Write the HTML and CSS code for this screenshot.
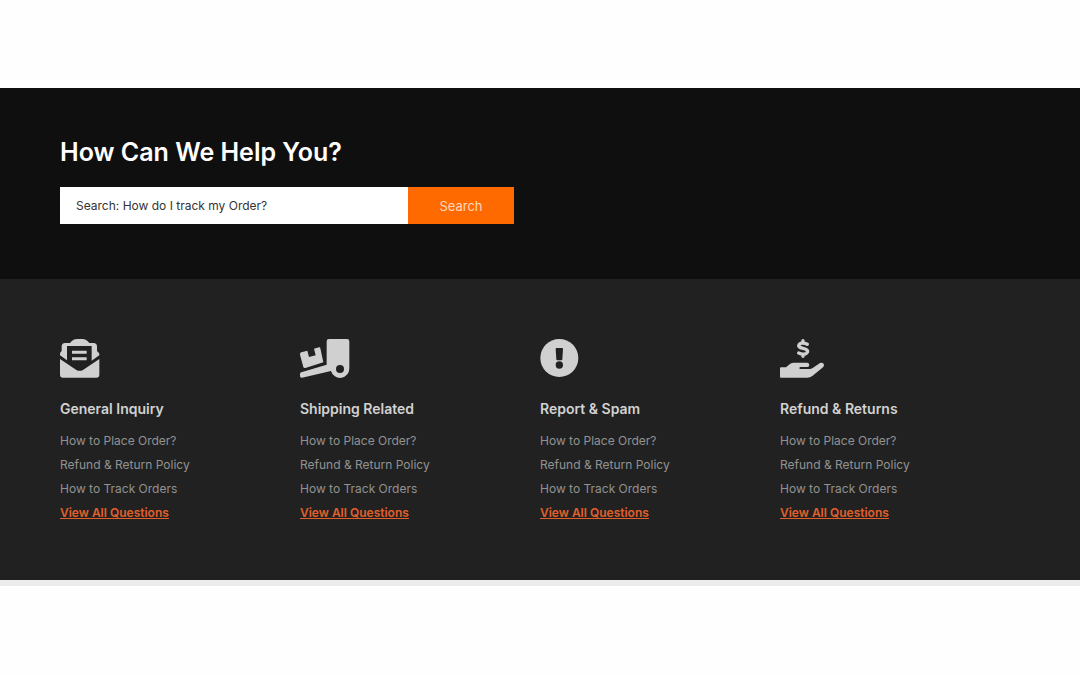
FILE: index.html
```html
<!DOCTYPE html>
<html lang="en">
<head>
<meta charset="utf-8">
<meta name="viewport" content="width=device-width, initial-scale=1">
<title>Help Center</title>
<link rel="stylesheet" href="styles.css">
</head>
<body>
<main class="help">
  <section class="hero">
    <h1 class="hero-title">How Can We Help You?</h1>
    <form class="search" role="search">
      <input class="search-input" type="text" aria-label="Search" placeholder="Search: How do I track my Order?">
      <button class="search-button" type="submit">Search</button>
    </form>
  </section>
  <section class="topics">
    <article class="topic">
      <svg class="icon" width="40" height="40" viewBox="30 24 120 120" aria-hidden="true">
        <path d="M30 76V72Q30 66 35 63V48Q36 39 45 39H60Q69 27 81 27H97Q109 27 118 39H130Q140 39 141 49V63Q147 67 148 72V76L125 92V48H51V91Z"/>
        <path d="M66 62H110V71H66ZM66 82H110V91H66Z"/>
        <path d="M30 87L78 119Q89 126 100 119L148 87V134Q148 143 139 143H39Q30 143 30 134Z"/>
      </svg>
      <h2 class="topic-title">General Inquiry</h2>
      <ul class="links">
        <li><a class="link" href="#">How to Place Order?</a></li>
        <li><a class="link" href="#">Refund &amp; Return Policy</a></li>
        <li><a class="link" href="#">How to Track Orders</a></li>
        <li><a class="link link-all" href="#">View All Questions</a></li>
      </ul>
    </article>
    <article class="topic">
      <svg class="icon" width="50" height="40" viewBox="30 24 150 120" aria-hidden="true">
        <path d="M34 67L52 62L57 81L77 76L72 56L87 52Q90 51 91 55L100 97L46 114Q41 115 40 111L30 74Q29 69 34 67Z"/>
        <path d="M110 34Q110 27 117 27H171Q178 27 178 34V115A28 28 0 0 1 123 123L36 143Q31 144 30 139V132Q30 128 34 127L110 104Z"/>
        <circle class="cut" cx="150" cy="117" r="12"/>
      </svg>
      <h2 class="topic-title">Shipping Related</h2>
      <ul class="links">
        <li><a class="link" href="#">How to Place Order?</a></li>
        <li><a class="link" href="#">Refund &amp; Return Policy</a></li>
        <li><a class="link" href="#">How to Track Orders</a></li>
        <li><a class="link link-all" href="#">View All Questions</a></li>
      </ul>
    </article>
    <article class="topic">
      <svg class="icon" width="40" height="40" viewBox="30 24 120 120" aria-hidden="true">
        <circle cx="88" cy="84" r="57"/>
        <path class="cut" d="M80 54H96Q99 54 99 57L97 88Q97 91 94 91H82Q79 91 79 88L77 57Q77 54 80 54Z"/>
        <circle class="cut" cx="88" cy="105" r="11"/>
      </svg>
      <h2 class="topic-title">Report &amp; Spam</h2>
      <ul class="links">
        <li><a class="link" href="#">How to Place Order?</a></li>
        <li><a class="link" href="#">Refund &amp; Return Policy</a></li>
        <li><a class="link" href="#">How to Track Orders</a></li>
        <li><a class="link link-all" href="#">View All Questions</a></li>
      </ul>
    </article>
    <article class="topic">
      <svg class="icon" width="50" height="40" viewBox="30 24 150 120" aria-hidden="true">
        <path class="stroke" d="M99 32V38M99 74V79M112 43Q99 36 90 41C82 48 88 53 99 55C111 57 117 63 109 70Q100 76 86 69"/>
        <path d="M33 112H48L60 102Q65 98 72 98H112Q118 99 118 105Q118 111 112 111H91Q88 112 88 114Q88 117 91 117H119Q124 117 128 114L150 99Q156 96 161 101Q164 107 159 112L127 138Q120 143 112 143H33Q30 143 30 140V115Q30 112 33 112Z"/>
      </svg>
      <h2 class="topic-title">Refund &amp; Returns</h2>
      <ul class="links">
        <li><a class="link" href="#">How to Place Order?</a></li>
        <li><a class="link" href="#">Refund &amp; Return Policy</a></li>
        <li><a class="link" href="#">How to Track Orders</a></li>
        <li><a class="link link-all" href="#">View All Questions</a></li>
      </ul>
    </article>
  </section>
</main>
</body>
</html>
```

FILE: styles.css
```css
* {
  box-sizing: border-box;
}

body {
  margin: 0;
  background: #fefefe;
  font-family: Inter, "Open Sans", sans-serif;
}

.help {
  margin: 88px 0;
  border-bottom: 6px solid #ececec;
}

.hero {
  padding: 48px 60px 55px;
  background: #0f0f0f;
}

.hero-title {
  margin: 0 0 19px;
  color: #fff;
  font-size: 25px;
  font-weight: 600;
  line-height: 32px;
}

.search {
  display: flex;
  max-width: 454px;
  height: 37px;
}

.search-input {
  flex: 1;
  min-width: 0;
  padding: 0 16px;
  border: 0;
  border-radius: 0;
  background: #fff;
  color: #333;
  font: 12px Inter, sans-serif;
}

.search-input::placeholder {
  color: #333;
  opacity: 1;
}

.search-button {
  width: 106px;
  padding: 0;
  border: 0;
  background: #ff6a00;
  color: #ffd9bd;
  font: 13px Inter, sans-serif;
}

.topics {
  display: grid;
  grid-template-columns: repeat(auto-fit, minmax(200px, 1fr));
  row-gap: 40px;
  padding: 59px 60px 55px;
  background: #212121;
}

.icon {
  display: block;
  fill: #d0d0d0;
}

.icon .cut {
  fill: #212121;
}

.icon .stroke {
  fill: none;
  stroke: #d0d0d0;
  stroke-width: 10;
  stroke-linecap: round;
}

.topic-title {
  margin: 21px 0 10px;
  color: #d2d2d2;
  font-size: 14px;
  font-weight: 600;
  line-height: 20px;
}

.links {
  margin: 0;
  padding: 0;
  list-style: none;
  font-size: 12px;
  line-height: 24px;
}

.links li {
  height: 24px;
}

.link {
  color: #929292;
  text-decoration: none;
}

.link-all {
  color: #e0602c;
  font-weight: 600;
  text-decoration: underline;
}
```
